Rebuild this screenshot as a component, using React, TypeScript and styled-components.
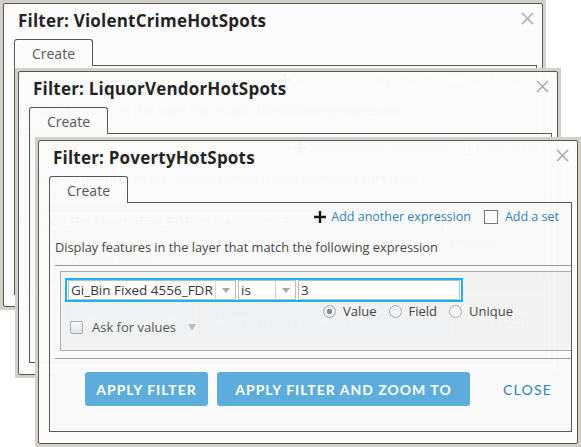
import React from 'react';
import styled, { createGlobalStyle } from 'styled-components';

const GlobalStyle = createGlobalStyle`
  body {
    margin: 0;
    background: #fff;
    font-family: 'Open Sans', 'Noto Sans', sans-serif;
  }
`;

const Desktop = styled.div`
  position: relative;
  width: 581px;
  height: 447px;
  overflow: hidden;
  background: #fff;
`;

const Frame = styled.div<{ $left: number; $top: number }>`
  position: absolute;
  left: ${(p) => p.$left}px;
  top: ${(p) => p.$top}px;
  width: 546px;
  height: 310px;
  box-sizing: border-box;
  padding: 3px;
  background: #d4d0c8;
  opacity: 0.975;
`;

const Window = styled.div`
  position: relative;
  height: 100%;
  box-sizing: border-box;
  border: 1px solid #555;
  border-radius: 2px;
  background: #fcfcfc;
  display: flex;
  flex-direction: column;
`;

const Title = styled.div`
  padding: 8px 0 0 14px;
  height: 18px;
  line-height: 18px;
  font-size: 17px;
  font-weight: 700;
  letter-spacing: 0.2px;
  color: #1e1e1e;
`;

const CloseX = styled.button`
  position: absolute;
  top: 8px;
  right: 8px;
  width: 13px;
  height: 13px;
  padding: 0;
  border: 0;
  background: none;
  display: flex;
`;

const TabStrip = styled.div`
  display: flex;
  margin: 9px 0 0 10px;
`;

const Tab = styled.div`
  position: relative;
  z-index: 1;
  width: 79px;
  height: 27px;
  box-sizing: border-box;
  border: 1px solid #555;
  border-bottom: 0;
  border-radius: 3px 3px 0 0;
  background: #fcfcfc;
  margin-bottom: -1px;
  display: flex;
  align-items: center;
  justify-content: center;
  font-size: 14px;
  color: #555;
`;

const Panel = styled.div`
  margin: 0 5px 0 10px;
  height: 230px;
  box-sizing: border-box;
  border: 1px solid #555;
  background: #fafafa;
  display: flex;
  flex-direction: column;
`;

const Toolbar = styled.div`
  height: 27px;
  display: flex;
  align-items: center;
  justify-content: flex-end;
  padding-right: 12px;
  font-size: 12.5px;
`;

const LinkText = styled.span`
  color: #2f7db4;
`;

const Plus = styled.svg`
  margin-right: 5px;
`;

const SetBox = styled.span`
  width: 14px;
  height: 14px;
  box-sizing: border-box;
  border: 1px solid #777;
  background: #fff;
  margin: 0 7px 0 13px;
`;

const Description = styled.div`
  margin: 8px 0 0 5px;
  height: 18px;
  line-height: 18px;
  font-size: 12.8px;
  color: #444;
`;

const Rule = styled.div<{ $gap: number }>`
  margin: ${(p) => p.$gap}px 0 0 5px;
  border-top: 1px solid #9a9a9a;
`;

const ExpressionBox = styled.div`
  margin: 5px 0 0 10px;
  height: 80px;
  box-sizing: border-box;
  border: 1px solid #aaa;
  border-right: 0;
  background: #f3f3f3;
  padding: 6px 0 0 4px;
`;

const ExpressionRow = styled.div`
  width: 398px;
  height: 24px;
  box-sizing: border-box;
  border: 2px solid #13b2e8;
  padding: 0 1px;
  display: flex;
  align-items: center;
  gap: 2px;
  background: #fff;
`;

const Field = styled.div<{ $width: number }>`
  width: ${(p) => p.$width}px;
  height: 20px;
  box-sizing: border-box;
  border: 1px solid #bcbcbc;
  background: #fff;
  display: flex;
  align-items: center;
  font-size: 13.5px;
  color: #333;
`;

const FieldText = styled.span`
  flex: 1;
  padding-left: 2px;
  white-space: nowrap;
  overflow: hidden;
`;

const Arrow = styled.span`
  width: 19px;
  height: 100%;
  border-left: 1px solid #d4d4d4;
  display: flex;
  align-items: center;
  justify-content: center;
  &::after {
    content: '';
    border-left: 4px solid transparent;
    border-right: 4px solid transparent;
    border-top: 5px solid #aaa;
  }
`;

const RadioRow = styled.div`
  margin: 2px 0 0 258px;
  height: 14px;
  display: flex;
  align-items: center;
  font-size: 13px;
  color: #444;
`;

const Radio = styled.span<{ $on?: boolean }>`
  width: 13px;
  height: 13px;
  box-sizing: border-box;
  border-radius: 50%;
  border: 1px solid #a8a8a8;
  background: ${(p) => (p.$on ? 'radial-gradient(circle, #8a8a8a 0 2.5px, #eee 3px)' : '#f6f6f6')};
  margin: 0 7px 0 12px;
  &:first-child {
    margin-left: 0;
  }
`;

const AskRow = styled.div`
  margin: 2px 0 0 5px;
  height: 14px;
  display: flex;
  align-items: center;
  font-size: 13px;
  color: #555;
`;

const AskBox = styled.span`
  width: 13px;
  height: 13px;
  box-sizing: border-box;
  border: 1px solid #aaa;
  border-radius: 2px;
  background: linear-gradient(#fafafa, #e6e6e6);
  margin-right: 9px;
`;

const Caret = styled.span`
  margin-left: 12px;
  border-left: 4px solid transparent;
  border-right: 4px solid transparent;
  border-top: 7px solid #bbb;
`;

const Buttons = styled.div`
  margin: 13px 0 0 35px;
  display: flex;
  align-items: center;
  gap: 9px;
`;

const Button = styled.button<{ $width: number }>`
  width: ${(p) => p.$width}px;
  height: 34px;
  border: 0;
  border-radius: 3px;
  background: #5aacdc;
  color: #fff;
  font-family: 'Lato', 'Open Sans', sans-serif;
  font-weight: 700;
  font-size: 14px;
  letter-spacing: 1px;
  padding: 0;
`;

const CloseLink = styled.span`
  margin-left: 24px;
  font-family: 'Lato', 'Open Sans', sans-serif;
  font-size: 14px;
  letter-spacing: 1.2px;
  color: #1f7fc2;
`;

const FilterDialog: React.FC<{ title: string; left: number; top: number }> = ({ title, left, top }) => (
  <Frame $left={left} $top={top}>
    <Window>
      <Title>Filter: {title}</Title>
      <CloseX aria-label="close">
        <svg width="13" height="13" viewBox="0 0 13 13">
          <path d="M1 1L12 12M12 1L1 12" stroke="#a9a9a9" strokeWidth="1.6" />
        </svg>
      </CloseX>
      <TabStrip>
        <Tab>Create</Tab>
      </TabStrip>
      <Panel>
        <Toolbar>
          <Plus width="12" height="12" viewBox="0 0 12 12">
            <path d="M6 0V12M0 6H12" stroke="#111" strokeWidth="2.4" />
          </Plus>
          <LinkText>Add another expression</LinkText>
          <SetBox />
          <LinkText>Add a set</LinkText>
        </Toolbar>
        <Description>Display features in the layer that match the following expression</Description>
        <Rule $gap={9} />
        <ExpressionBox>
          <ExpressionRow>
            <Field $width={168}>
              <FieldText>Gi_Bin Fixed 4556_FDR</FieldText>
              <Arrow />
            </Field>
            <Field $width={58}>
              <FieldText>is</FieldText>
              <Arrow />
            </Field>
            <Field $width={162}>
              <FieldText>3</FieldText>
            </Field>
          </ExpressionRow>
          <RadioRow>
            <Radio $on />
            Value
            <Radio />
            Field
            <Radio />
            Unique
          </RadioRow>
          <AskRow>
            <AskBox />
            Ask for values
            <Caret />
          </AskRow>
        </ExpressionBox>
        <Rule $gap={7} />
        <Buttons>
          <Button $width={123}>APPLY FILTER</Button>
          <Button $width={253}>APPLY FILTER AND ZOOM TO</Button>
          <CloseLink>CLOSE</CloseLink>
        </Buttons>
      </Panel>
    </Window>
  </Frame>
);

export default function App() {
  return (
    <Desktop>
      <GlobalStyle />
      <FilterDialog title="ViolentCrimeHotSpots" left={0} top={0} />
      <FilterDialog title="LiquorVendorHotSpots" left={15} top={68} />
      <FilterDialog title="PovertyHotSpots" left={35} top={137} />
    </Desktop>
  );
}
